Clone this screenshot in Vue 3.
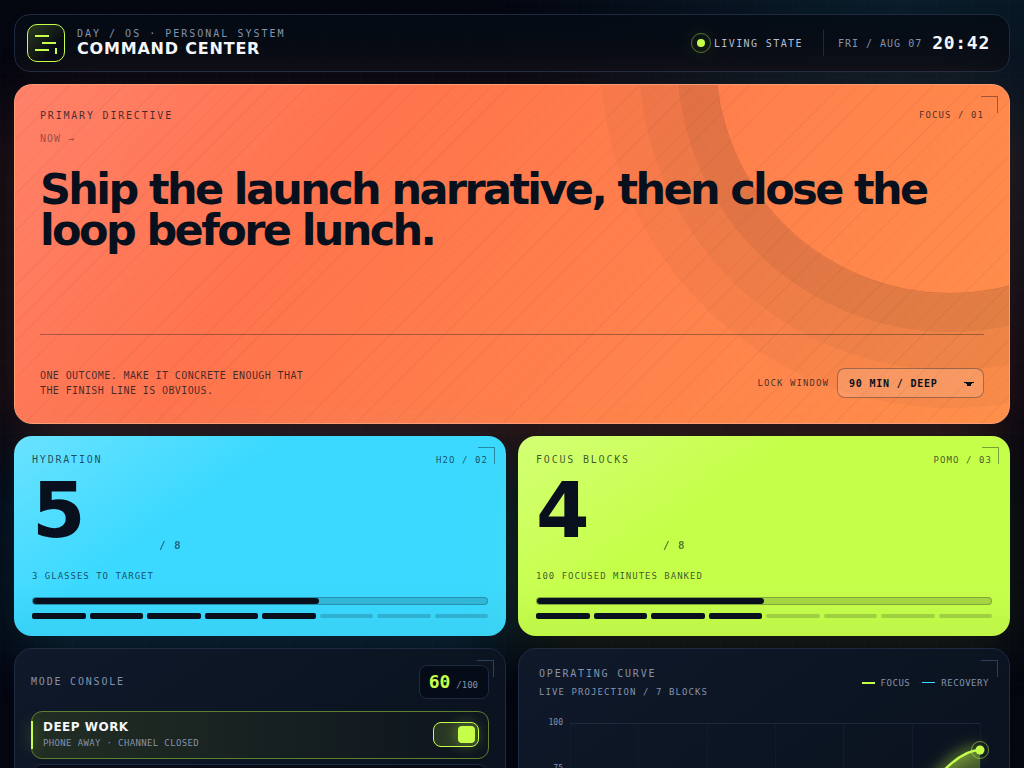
<script setup>
import { ref, computed } from 'vue'

const lockWindow = ref('90 MIN / DEEP')
const deepWork = ref(true)

const counters = [
  { id: 'water', title: 'HYDRATION', tag: 'H2O / 02', value: 5, goal: 8, note: '3 GLASSES TO TARGET' },
  { id: 'pomo', title: 'FOCUS BLOCKS', tag: 'POMO / 03', value: 4, goal: 8, note: '100 FOCUSED MINUTES BANKED' },
]

const metrics = computed(() =>
  counters.map((c) => ({ ...c, percent: Math.round((c.value / c.goal) * 100) + '%' }))
)

const columns = [31, 99, 168, 236, 304, 373, 441]
</script>

<template>
  <div class="page">
    <header class="topbar">
      <div class="brand">
        <svg class="logo" viewBox="0 0 38 38" aria-hidden="true">
          <defs>
            <linearGradient id="logoFill" x1="0" y1="0" x2="1" y2="1">
              <stop offset="0" stop-color="#c6ff4a" stop-opacity="0.2" />
              <stop offset="0.7" stop-color="#c6ff4a" stop-opacity="0" />
            </linearGradient>
          </defs>
          <rect x="0.5" y="0.5" width="37" height="37" rx="9.5" fill="url(#logoFill)" stroke="#c6ff4a" />
          <g fill="#c6ff4a">
            <rect x="8" y="11" width="14" height="2" />
            <rect x="15" y="18" width="14" height="2" />
            <rect x="8" y="25" width="14" height="2" />
            <rect x="28" y="24" width="2" height="6" />
          </g>
        </svg>
        <div>
          <p class="kicker">DAY / OS · PERSONAL SYSTEM</p>
          <h1 class="title">COMMAND CENTER</h1>
        </div>
      </div>
      <div class="status">
        <div class="living"><i class="pulse"></i><span>LIVING STATE</span></div>
        <div class="clock">
          <span class="date">FRI / AUG 07</span>
          <time class="time">20:42</time>
        </div>
      </div>
    </header>

    <main class="board">
      <section class="card hero">
        <div class="card-head">
          <h2 class="label">PRIMARY DIRECTIVE</h2>
          <span class="tag">FOCUS / 01</span>
        </div>
        <p class="now">NOW →</p>
        <p class="directive">Ship the launch narrative, then close the loop before lunch.</p>
        <div class="hero-foot">
          <p class="hint">ONE OUTCOME. MAKE IT CONCRETE ENOUGH THAT THE FINISH LINE IS OBVIOUS.</p>
          <div class="lock">
            <label class="lock-label" for="lock">LOCK WINDOW</label>
            <select id="lock" v-model="lockWindow" class="lock-select">
              <option>90 MIN / DEEP</option>
            </select>
          </div>
        </div>
      </section>

      <section v-for="m in metrics" :key="m.id" class="card metric" :class="m.id">
        <div class="card-head">
          <h2 class="label">{{ m.title }}</h2>
          <span class="tag">{{ m.tag }}</span>
        </div>
        <div class="reading">
          <span class="value">{{ m.value }}</span>
          <span class="unit">/ {{ m.goal }}</span>
        </div>
        <p class="note">{{ m.note }}</p>
        <div class="bar"><div class="fill" :style="{ width: m.percent }"></div></div>
        <div class="segments">
          <i v-for="n in m.goal" :key="n" :class="{ on: n <= m.value }"></i>
        </div>
      </section>

      <section class="card panel modes">
        <div class="modes-head">
          <h2 class="label">MODE CONSOLE</h2>
          <div class="score"><strong>60</strong><span>/100</span></div>
        </div>
        <div class="mode active">
          <label for="deep">
            <span class="mode-name">DEEP WORK</span>
            <span class="mode-sub">PHONE AWAY · CHANNEL CLOSED</span>
          </label>
          <input id="deep" v-model="deepWork" class="toggle" type="checkbox" />
        </div>
        <div class="mode"></div>
      </section>

      <section class="card panel curve">
        <div class="curve-head">
          <div>
            <h2 class="label">OPERATING CURVE</h2>
            <p class="projection">LIVE PROJECTION / 7 BLOCKS</p>
          </div>
          <div class="legend">
            <span class="key focus">FOCUS</span>
            <span class="key recovery">RECOVERY</span>
          </div>
        </div>
        <svg class="chart" viewBox="0 0 450 200" role="img" aria-label="Operating curve">
          <defs>
            <linearGradient id="area" x1="0" y1="0" x2="0" y2="1">
              <stop offset="0" stop-color="#c6ff4a" stop-opacity="0.34" />
              <stop offset="1" stop-color="#c6ff4a" stop-opacity="0" />
            </linearGradient>
            <filter id="glow" x="-50%" y="-50%" width="200%" height="200%">
              <feGaussianBlur stdDeviation="7" />
            </filter>
          </defs>
          <g class="columns">
            <line v-for="x in columns" :key="x" :x1="x + 0.5" y1="15" :x2="x + 0.5" y2="200" />
          </g>
          <g class="rows">
            <line x1="31" y1="15.5" x2="441" y2="15.5" />
            <line x1="31" y1="61.5" x2="441" y2="61.5" />
          </g>
          <g class="ticks">
            <text x="24" y="17">100</text>
            <text x="24" y="63">75</text>
          </g>
          <path d="M373 98 C396 72 418 42 441 42 V200 H373 Z" fill="url(#area)" />
          <path d="M373 98 C396 72 418 42 441 42" fill="none" stroke="#c6ff4a" stroke-opacity="0.7" stroke-width="6" filter="url(#glow)" />
          <path d="M373 98 C396 72 418 42 441 42" fill="none" stroke="#c6ff4a" stroke-width="2.4" />
          <circle cx="441" cy="42" r="8.5" fill="none" stroke="#c6ff4a" stroke-opacity="0.5" />
          <circle cx="441" cy="42" r="4.5" fill="#c6ff4a" />
        </svg>
      </section>
    </main>
  </div>
</template>

<style>
body {
  margin: 0;
  background: #03050d;
}
</style>

<style scoped>
*,
*::before,
*::after {
  box-sizing: border-box;
}

h1,
h2,
p {
  margin: 0;
  font-weight: normal;
}

.page {
  --ink: #07101c;
  --lime: #c6ff4a;
  --cyan: #3bd9ff;
  --muted: #8492ab;
  --edge: #1d2a40;
  display: flex;
  flex-direction: column;
  gap: 12px;
  height: 100vh;
  overflow: hidden;
  padding: 14px;
  color: #f4f7fb;
  font-family: "DejaVu Sans Mono", monospace;
  font-size: 10px;
  background:
    linear-gradient(rgba(140, 170, 220, 0.014) 1px, transparent 1px) 0 0 / 36px 36px,
    linear-gradient(90deg, rgba(140, 170, 220, 0.014) 1px, transparent 1px) 0 0 / 36px 36px,
    radial-gradient(circle at 88% -6%, rgba(59, 217, 255, 0.12), transparent 34%),
    #03050f;
}

.topbar {
  display: flex;
  flex: none;
  align-items: center;
  justify-content: space-between;
  padding: 9px 19px 9px 12px;
  border: 1px solid var(--edge);
  border-radius: 16px;
  background: linear-gradient(rgba(4, 11, 20, 0.9), rgba(10, 13, 22, 0.85));
  position: relative;
}

.brand {
  display: flex;
  align-items: center;
  gap: 12px;
}

.logo {
  width: 38px;
  height: 38px;
}

.kicker {
  color: var(--muted);
  letter-spacing: 0.2em;
  line-height: 11px;
}

.title {
  font: bold 16px/19px "DejaVu Sans", sans-serif;
  letter-spacing: 0.05em;
}

.status,
.living,
.clock {
  display: flex;
  align-items: center;
}

.status {
  gap: 20px;
}

.living {
  gap: 9px;
  color: #b4bfd0;
  letter-spacing: 0.14em;
}

.pulse {
  position: relative;
  width: 8px;
  height: 8px;
  border-radius: 50%;
  background: var(--lime);
  box-shadow: 0 0 18px rgba(198, 255, 74, 0.5);
}

.pulse::after {
  content: "";
  position: absolute;
  inset: -6px;
  border: 1px solid rgba(198, 255, 74, 0.4);
  border-radius: 50%;
}

.clock {
  gap: 10px;
  height: 26px;
  padding-left: 14px;
  border-left: 1px solid var(--edge);
}

.date {
  color: var(--muted);
  letter-spacing: 0.1em;
}

.time {
  padding-bottom: 1px;
  font-size: 18px;
  font-weight: bold;
  letter-spacing: 0.04em;
}

.board {
  display: grid;
  grid-template-columns: 1fr 1fr;
  gap: 12px;
}

.card {
  position: relative;
  border-radius: 18px;
}

.card::after {
  content: "";
  position: absolute;
  top: 11px;
  right: 11px;
  width: 17px;
  height: 17px;
  border: 1px solid rgba(7, 16, 28, 0.4);
  border-width: 1px 1px 0 0;
}

.card-head {
  display: flex;
  justify-content: space-between;
  line-height: 11px;
}

.label {
  font-size: 10px;
  letter-spacing: 0.18em;
}

.tag {
  font-size: 9px;
  letter-spacing: 0.12em;
}

.hero {
  grid-column: 1 / -1;
  display: flex;
  flex-direction: column;
  min-height: 340px;
  padding: 25px;
  border: 1px solid #ff9c76;
  color: rgba(7, 16, 28, 0.76);
  background:
    repeating-linear-gradient(135deg, transparent 0 12px, rgba(7, 16, 28, 0.04) 12px 13px),
    linear-gradient(125deg, #ff816a, #ff744d 30%, #ff8f4b);
  box-shadow: 0 20px 70px rgba(255, 115, 77, 0.2);
  overflow: hidden;
}

.hero::before {
  content: "";
  position: absolute;
  top: -261px;
  right: -176px;
  width: 470px;
  height: 470px;
  border: 1px solid rgba(7, 16, 28, 0.16);
  border-radius: 50%;
  box-shadow:
    0 0 0 38px rgba(7, 16, 28, 0.05),
    0 0 0 76px rgba(7, 16, 28, 0.035),
    0 0 0 114px rgba(7, 16, 28, 0.03);
}

.hero > * {
  position: relative;
}

.now {
  margin-top: 12px;
  color: rgba(7, 16, 28, 0.46);
  letter-spacing: 0.1em;
  line-height: 12px;
}

.directive {
  margin-top: 24px;
  color: var(--ink);
  font: bold 43px/41px "DejaVu Sans", sans-serif;
  letter-spacing: -0.061em;
}

.hero-foot {
  display: flex;
  align-items: center;
  justify-content: space-between;
  margin-top: auto;
  padding-top: 33px;
  border-top: 1px solid rgba(7, 16, 28, 0.35);
}

.hint {
  max-width: 280px;
  letter-spacing: 0.04em;
  line-height: 15px;
}

.lock {
  display: flex;
  align-items: center;
  gap: 8px;
}

.lock-label {
  font-size: 9px;
  letter-spacing: 0.12em;
}

.lock-select {
  width: 147px;
  height: 30px;
  padding: 0 11px;
  appearance: none;
  border: 1px solid rgba(7, 16, 28, 0.36);
  border-radius: 8px;
  color: var(--ink);
  font: bold 10px "DejaVu Sans Mono", monospace;
  letter-spacing: 0.08em;
  background:
    linear-gradient(45deg, transparent 50%, var(--ink) 50%) right 14px top 13px / 5px 5px no-repeat,
    linear-gradient(135deg, var(--ink) 50%, transparent 50%) right 9px top 13px / 5px 5px no-repeat,
    rgba(255, 255, 255, 0.14);
}

.metric {
  padding: 18px 18px 17px;
  color: rgba(7, 16, 28, 0.72);
}

.metric .tag {
  padding-top: 1px;
}

.water {
  background:
    linear-gradient(145deg, rgba(255, 255, 255, 0.24), transparent 36%),
    linear-gradient(transparent 74%, rgba(7, 16, 28, 0.04)),
    var(--cyan);
  box-shadow: 0 20px 60px rgba(59, 217, 255, 0.16);
}

.pomo {
  background:
    linear-gradient(145deg, rgba(255, 255, 255, 0.24), transparent 36%),
    linear-gradient(transparent 74%, rgba(7, 16, 28, 0.04)),
    var(--lime);
  box-shadow: 0 20px 60px rgba(198, 255, 74, 0.1);
}

.reading {
  display: flex;
  align-items: flex-end;
  gap: 7px;
  margin-top: 13px;
}

.value {
  width: 120px;
  padding-bottom: 9px;
  color: var(--ink);
  font: bold 77px/64px "DejaVu Sans", sans-serif;
}

.unit {
  font-size: 11px;
  font-weight: bold;
  letter-spacing: 0.08em;
  line-height: 12px;
  opacity: 0.8;
}

.note {
  margin-top: 18px;
  font-size: 9px;
  letter-spacing: 1px;
  line-height: 12px;
}

.bar {
  height: 8px;
  margin-top: 15px;
  border: 1px solid rgba(7, 16, 28, 0.24);
  border-radius: 4px;
  background: rgba(7, 16, 28, 0.16);
}

.fill {
  height: 6px;
  border-radius: 3px;
  background: var(--ink);
}

.segments {
  display: grid;
  grid-template-columns: repeat(8, 1fr);
  align-items: center;
  gap: 4px;
  height: 6px;
  margin-top: 8px;
}

.segments i {
  height: 4px;
  border-radius: 2px;
  background: rgba(7, 16, 28, 0.18);
}

.segments .on {
  height: 6px;
  background: var(--ink);
}

.panel {
  min-height: 300px;
  border: 1px solid var(--edge);
  color: var(--muted);
  background: linear-gradient(145deg, #0f192a, #0b1421 50%, #0c0f1c);
}

.panel::after {
  border-color: #2c3f5e;
}

.modes {
  padding: 16px;
}

.modes-head {
  display: flex;
  align-items: center;
  justify-content: space-between;
  margin-bottom: 12px;
}

.modes-head .label {
  padding-bottom: 1px;
}

.score {
  display: flex;
  align-items: center;
  gap: 6px;
  height: 34px;
  padding: 0 10px 0 9px;
  border: 1px solid var(--edge);
  border-radius: 8px;
  background: #060c17;
}

.score strong {
  padding-bottom: 1px;
  color: var(--lime);
  font-size: 18px;
}

.score span {
  padding-top: 6px;
  font-size: 9px;
}

.mode {
  position: relative;
  display: flex;
  align-items: center;
  justify-content: space-between;
  height: 48px;
  margin-bottom: 5px;
  padding: 0 9px 1px 11px;
  border: 1px solid var(--edge);
  border-radius: 11px;
  background: #070b16;
}

.mode.active {
  border-color: #5f7f30;
  background: linear-gradient(90deg, rgba(198, 255, 74, 0.12), rgba(198, 255, 74, 0.01)), #0b111e;
}

.mode.active::before {
  content: "";
  position: absolute;
  top: 9px;
  bottom: 9px;
  left: -1px;
  width: 2px;
  background: var(--lime);
  box-shadow: 0 0 14px rgba(198, 255, 74, 0.6);
}

.mode-name,
.mode-sub {
  display: block;
}

.mode-name {
  color: #f4f7fb;
  font: bold 12px/16px "DejaVu Sans", sans-serif;
  letter-spacing: 0.04em;
}

.mode-sub {
  font-size: 9px;
  letter-spacing: 0.04em;
  line-height: 16px;
}

.toggle {
  display: flex;
  width: 46px;
  height: 25px;
  margin: 0;
  padding: 3px;
  appearance: none;
  border: 1px solid #33425c;
  border-radius: 8px;
  background: #0b111e;
}

.toggle::before {
  content: "";
  width: 17px;
  height: 17px;
  border-radius: 4px;
  background: var(--muted);
}

.toggle:checked {
  justify-content: flex-end;
  border-color: var(--lime);
  background: rgba(198, 255, 74, 0.14);
}

.toggle:checked::before {
  background: var(--lime);
  box-shadow: 0 0 16px rgba(198, 255, 74, 0.5);
}

.curve {
  padding: 18px 20px;
}

.curve-head {
  display: flex;
  align-items: center;
  justify-content: space-between;
}

.curve-head .label {
  line-height: 13px;
}

.projection {
  margin-top: 6px;
  font-size: 9px;
  letter-spacing: 0.12em;
  line-height: 12px;
}

.legend {
  display: flex;
  gap: 12px;
  font-size: 9px;
  letter-spacing: 0.06em;
}

.key {
  display: flex;
  align-items: center;
  gap: 6px;
}

.key::before {
  content: "";
  width: 13px;
  height: 2px;
  background: var(--lime);
}

.recovery::before {
  height: 1px;
  background: var(--cyan);
}

.chart {
  display: block;
  width: 100%;
  margin-top: 10px;
}

.columns line {
  stroke: #111c2b;
}

.rows line {
  stroke: #1c2939;
}

.ticks text {
  fill: var(--muted);
  font-family: "DejaVu Sans Mono", monospace;
  font-size: 8px;
  text-anchor: end;
}
</style>
